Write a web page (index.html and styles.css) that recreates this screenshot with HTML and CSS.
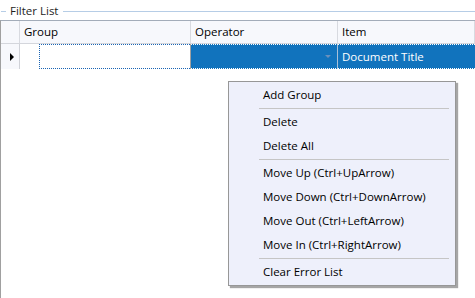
FILE: index.html
```html
<!DOCTYPE html>
<html lang="en">
<head>
    <meta charset="UTF-8">
    <title>Filter List</title>
    <link rel="stylesheet" href="styles.css">
</head>
<body>

<!-- Group box caption -->
<div class="group-title">
    <span class="rule short"></span>
    <span class="title">Filter List</span>
    <span class="rule long"></span>
</div>

<!-- Filter grid -->
<div class="grid">
    <div class="row head">
        <div class="cell rowhead"></div>
        <div class="cell col-group">Group</div>
        <div class="cell col-op">Operator</div>
        <div class="cell col-item">Item</div>
    </div>
    <div class="row data">
        <div class="cell rowhead"><span class="current"></span></div>
        <div class="cell col-group"><div class="focus"></div></div>
        <div class="cell col-op sel"><span class="dropdown"></span></div>
        <div class="cell col-item sel">Document Title</div>
    </div>
</div>

<!-- Context menu -->
<div class="menu">
    <div class="menu-item">Add Group</div>
    <div class="menu-sep"></div>
    <div class="menu-item">Delete</div>
    <div class="menu-item">Delete All</div>
    <div class="menu-sep"></div>
    <div class="menu-item">Move Up (Ctrl+UpArrow)</div>
    <div class="menu-item">Move Down (Ctrl+DownArrow)</div>
    <div class="menu-item">Move Out (Ctrl+LeftArrow)</div>
    <div class="menu-item">Move In (Ctrl+RightArrow)</div>
    <div class="menu-sep"></div>
    <div class="menu-item">Clear Error List</div>
</div>

</body>
</html>
```

FILE: styles.css
```css
body {
    margin: 0;
    font-family: "Open Sans", sans-serif;
    font-size: 11.5px;
    color: #000;
    background: #fff;
    width: 475px;
    height: 298px;
    overflow: hidden;
}
.group-title {
    display: flex;
    align-items: center;
    height: 20px;
}
.rule {
    height: 1px;
    margin-top: 2px;
    background: #b6cde6;
}
.rule.short {
    width: 5px;
    margin-left: 1px;
}
.rule.long {
    flex: 1;
}
.title {
    padding: 0 5px 0 4px;
    color: #1e1e1e;
}
.grid {
    box-sizing: border-box;
    height: 278px;
    border-left: 1px solid #a0a0a0;
    border-top: 1px solid #a3acb9;
}
.row {
    display: grid;
    grid-template-columns: 19px 171px 147px 1fr;
}
.cell {
    box-sizing: border-box;
}
.head {
    height: 22px;
    background: #f7f8fc;
    border-bottom: 1px solid #d4d6dc;
}
.head .cell {
    border-right: 1px solid #d8dae0;
    padding-left: 4px;
    line-height: 21px;
}
.data {
    height: 25px;
}
.data .rowhead {
    background: #f7f8fc;
    border-right: 1px solid #d0d2d8;
    display: flex;
    align-items: center;
    padding-left: 9px;
}
.current {
    width: 0;
    height: 0;
    border-top: 4px solid transparent;
    border-bottom: 4px solid transparent;
    border-left: 4px solid #000;
}
.data .col-group {
    background: #fff;
    border-right: 1px solid #a0a0a0;
}
.focus {
    box-sizing: border-box;
    height: 100%;
    margin-left: 19px;
    border: 1px dotted #1a64b4;
    border-right: none;
}
.sel {
    background: #1173bd;
    color: #fff;
    border-top: 1px dotted #fff;
    border-bottom: 1px dotted #fff;
}
.data .col-op {
    border-right: 1px solid #a9c0d8;
    display: flex;
    align-items: center;
}
.dropdown {
    width: 0;
    height: 0;
    margin-left: auto;
    margin-right: 6px;
    border-left: 3px solid transparent;
    border-right: 3px solid transparent;
    border-top: 3px solid #6b90bb;
}
.data .col-item {
    padding-left: 4px;
    line-height: 23px;
}
.menu {
    position: absolute;
    left: 228px;
    top: 81px;
    width: 228px;
    box-sizing: border-box;
    padding: 1px 0;
    background: #eef0fb;
    border: 1px solid #979797;
    box-shadow: 2px 2px 1px rgba(0, 0, 0, 0.35);
}
.menu-item {
    height: 24px;
    line-height: 24px;
    padding-left: 34px;
    white-space: nowrap;
}
.menu-sep {
    height: 1px;
    margin: 1px 6px 1px 30px;
    background: #c5c5c5;
}
```
